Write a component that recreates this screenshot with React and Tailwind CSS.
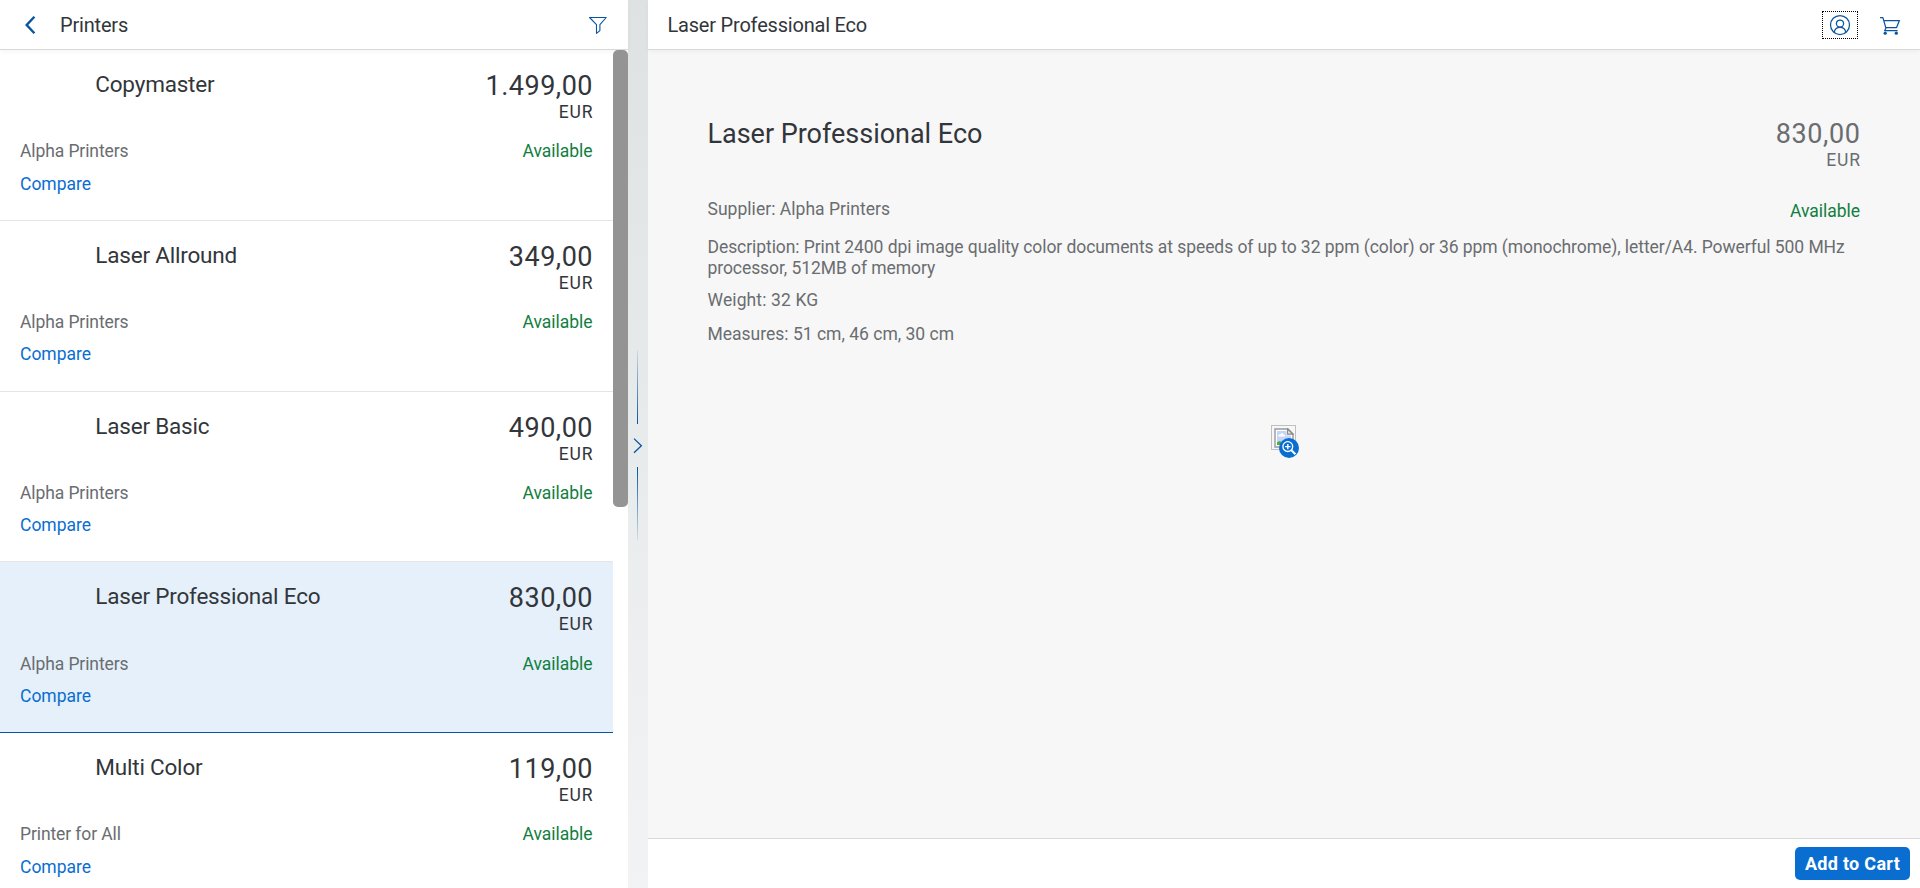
const printers = [
  { name: 'Copymaster', price: '1.499,00', supplier: 'Alpha Printers' },
  { name: 'Laser Allround', price: '349,00', supplier: 'Alpha Printers' },
  { name: 'Laser Basic', price: '490,00', supplier: 'Alpha Printers' },
  { name: 'Laser Professional Eco', price: '830,00', supplier: 'Alpha Printers', selected: true },
  { name: 'Multi Color', price: '119,00', supplier: 'Printer for All' },
];

function BackIcon() {
  return (
    <svg className="h-[20px] w-[14px]" viewBox="0 0 14 20" fill="none" stroke="#0854a0" strokeWidth="2.4">
      <path d="M12.4 1.8 L4.7 10 L12.4 18.2" />
    </svg>
  );
}

function FilterIcon() {
  return (
    <svg className="h-[20px] w-[20px]" viewBox="0 0 20 20" fill="none" stroke="#0854a0" strokeWidth="1.1" strokeLinejoin="round">
      <path d="M1.6 2.5 H18.2 L11.9 9.7 V15.6 L8.5 18.4 V9.7 Z" />
    </svg>
  );
}

function AccountIcon() {
  return (
    <svg className="h-[22px] w-[22px]" viewBox="0 0 22 22" fill="none" stroke="#0854a0" strokeWidth="1.25">
      <circle cx="11" cy="11" r="9.5" />
      <circle cx="11" cy="9.6" r="3.6" />
      <path d="M5.2 18.3 C5.8 15.1 8 13.4 11 13.4 C14 13.4 16.2 15.1 16.8 18.3" />
    </svg>
  );
}

function CartIcon() {
  return (
    <svg className="h-[20px] w-[22px]" viewBox="0 0 22 20" fill="none" stroke="#0854a0" strokeWidth="1.25" strokeLinejoin="round">
      <path d="M1 2.6 H3.9 L6.9 13.2 L5.7 15.5 H18.6" />
      <path d="M4.9 5.5 H20.4 L17.6 12.6 H6.8" />
      <circle cx="6.2" cy="18.2" r="1.6" fill="#0854a0" stroke="none" />
      <circle cx="17.3" cy="18.2" r="1.6" fill="#0854a0" stroke="none" />
    </svg>
  );
}

function MissingImageIcon() {
  return (
    <svg className="h-[20px] w-[20px]" viewBox="0 0 20 20">
      <path d="M1 1 H14 L19 6 V19 H1 Z" fill="#fff" stroke="#999" strokeWidth="1.4" />
      <path d="M3 3 H12.6 V7.4 H17 V17 H3 Z" fill="#c3d6f7" />
      <path d="M4.2 8.6 C4 7 5.6 6.4 6.3 6.6 C7 4.8 9.4 5 9.8 6.7 C11 6.6 11.4 7.6 11.1 8.6 Z" fill="#fff" />
      <path d="M3 17 V14.6 C5 12.2 8 12.6 10 17 Z" fill="#4caf3a" />
      <path d="M13.6 1 V6.2 H19 Z" fill="#eee" stroke="#888" strokeWidth="1.2" />
    </svg>
  );
}

function ZoomBadge() {
  return (
    <svg className="absolute left-[7px] top-[12px] h-[20px] w-[20px]" viewBox="0 0 20 20" fill="none" stroke="#fff">
      <circle cx="10" cy="10" r="10" fill="#0a6ed1" stroke="none" />
      <circle cx="8.8" cy="8.6" r="4.9" strokeWidth="1.3" />
      <path d="M8.8 5.9 V11.3 M6.1 8.6 H11.5" strokeWidth="1.4" />
      <path d="M12.4 12.2 L16.4 16.2" strokeWidth="2" />
    </svg>
  );
}

function PrinterItem({ item }) {
  return (
    <li
      className={
        item.selected
          ? 'h-[170.75px] shrink-0 border-b border-[#0854a0] bg-[#e5f0fa] pl-5 pr-[20.5px] pt-[19px]'
          : 'h-[170.75px] shrink-0 border-b border-[#e5e5e5] bg-white pl-5 pr-[20.5px] pt-[19px]'
      }
    >
      <div className="flex h-[71.3px] justify-between">
        <h3 className="pl-[75.3px] text-[22.5px] leading-[30px] tracking-[-0.2px]">{item.name}</h3>
        <div className="flex flex-col items-end pt-[2px]">
          <span className="mr-[-0.5px] text-[27px] leading-[31px] tracking-[0.5px]">{item.price}</span>
          <span className="mr-[-1px] text-[17.5px] leading-[20px] tracking-[0.9px]">EUR</span>
        </div>
      </div>
      <div className="flex justify-between text-[17.5px] leading-[22px]">
        <span className="tracking-[-0.1px] text-[#6a6d70]">{item.supplier}</span>
        <span className="tracking-[-0.04px] text-[#107e3e]">Available</span>
      </div>
      <a className="mt-[10.3px] block w-fit text-[17.5px] leading-[22px] text-[#0a6ed1]">Compare</a>
    </li>
  );
}

function Splitter() {
  return (
    <div className="flex w-5 shrink-0 flex-col items-center bg-linear-to-b from-[#dee2e3] via-[#e8ebec] to-[#f2f3f5] pr-[2px] pt-[350px]">
      <div className="ml-px h-[74px] w-px bg-linear-to-t from-[#0854a0] to-[#0854a0]/10" />
      <div className="flex h-[43px] items-center pl-px">
        <svg className="h-[16px] w-[10px]" viewBox="0 0 10 16" fill="none" stroke="#0854a0" strokeWidth="1.3">
          <path d="M1 0.6 L8.4 7.7 L1 14.8" />
        </svg>
      </div>
      <div className="ml-px h-[73px] w-px bg-linear-to-b from-[#0854a0] to-[#0854a0]/10" />
    </div>
  );
}

export default function App() {
  return (
    <div className="flex h-[888px] w-[1920px] overflow-hidden bg-white font-['Roboto',sans-serif] text-[#32363a]">
      <aside className="flex w-[628px] shrink-0 flex-col">
        <header className="z-10 flex h-[50px] shrink-0 items-center border-b border-[#d9d9d9] bg-white pl-[22px] pr-[20px] shadow-[0_2px_4px_rgba(0,0,0,0.04)]">
          <BackIcon />
          <h1 className="ml-[24px] flex-1 text-[20px] leading-[26px] tracking-[-0.18px]">Printers</h1>
          <FilterIcon />
        </header>
        <div className="flex min-h-0 flex-1">
          <ul className="flex w-[613px] flex-col overflow-hidden">
            {printers.map((p) => (
              <PrinterItem key={p.name} item={p} />
            ))}
          </ul>
          <div className="z-20 h-[457px] w-[15px] rounded-[5px] bg-[#949494]" />
        </div>
      </aside>

      <Splitter />

      <section className="flex min-w-0 flex-1 flex-col bg-[#f7f7f7]">
        <header className="flex h-[50px] shrink-0 items-center border-b border-[#d9d9d9] bg-white pl-[19.5px] pr-[19px] shadow-[0_2px_4px_rgba(0,0,0,0.04)]">
          <h1 className="flex-1 text-[20px] leading-[26px] tracking-[-0.2px]">Laser Professional Eco</h1>
          <div className="mr-[21px] flex h-[28px] w-[36px] items-center justify-center border border-dotted border-black">
            <AccountIcon />
          </div>
          <CartIcon />
        </header>

        <main className="flex flex-1 flex-col pl-[59.5px] pr-[60px] pt-[68px] text-[#6a6d70]">
          <div className="flex h-[80px] justify-between">
            <h2 className="text-[27px] leading-[33px] tracking-[-0.02px] text-[#32363a]">Laser Professional Eco</h2>
            <div className="flex flex-col items-end pt-[1px]">
              <span className="mr-[-0.5px] text-[27px] leading-[31px] tracking-[0.6px]">830,00</span>
              <span className="mr-[-1px] text-[17.5px] leading-[20px] tracking-[0.9px]">EUR</span>
            </div>
          </div>
          <div className="flex justify-between text-[17.5px] leading-[22px]">
            <span className="tracking-[0.03px]">Supplier: Alpha Printers</span>
            <span className="pt-[2px] tracking-[-0.04px] text-[#107e3e]">Available</span>
          </div>
          <p className="mt-[15px] text-[17.5px] leading-[21px] tracking-[-0.069px]">
            Description: Print 2400 dpi image quality color documents at speeds of up to 32 ppm (color) or 36 ppm (monochrome), letter/A4. Powerful 500 MHz
            <br />
            processor, 512MB of memory
          </p>
          <p className="mt-[10px] text-[17.5px] leading-[22px] tracking-[0.12px]">Weight: 32 KG</p>
          <p className="mt-[12px] text-[17.5px] leading-[22px]">Measures: 51 cm, 46 cm, 30 cm</p>
          <div className="relative ml-[563.5px] mt-[80px] flex size-[25px] items-center justify-center border border-[#c0c0c0]">
            <MissingImageIcon />
            <ZoomBadge />
          </div>
        </main>

        <footer className="flex h-[50px] shrink-0 items-start justify-end border-t border-[#d9d9d9] bg-white pr-[10px] pt-[8px]">
          <button className="h-[33px] w-[115px] rounded-[5px] bg-[#0a6ed1] text-[18px] font-bold leading-[33px] tracking-[0.3px] text-white">
            Add to Cart
          </button>
        </footer>
      </section>
    </div>
  );
}
